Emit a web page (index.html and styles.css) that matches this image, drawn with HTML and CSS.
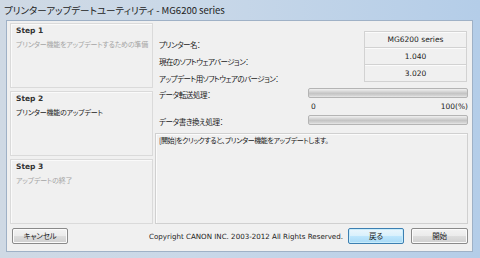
FILE: index.html
```html
<!DOCTYPE html>
<html lang="ja">
<head>
<meta charset="utf-8">
<link rel="stylesheet" href="styles.css">
</head>
<body>
<div class="window">
  <div class="titlebar"><span class="title">プリンターアップデートユーティリティ - MG6200 series</span></div>
  <div class="client">
    <div class="main">
      <div class="steps">
        <div class="step">
          <div class="step-title">Step 1</div>
          <div class="step-desc dim">プリンター機能をアップデートするための準備</div>
        </div>
        <div class="step">
          <div class="step-title">Step 2</div>
          <div class="step-desc">プリンター機能のアップデート</div>
        </div>
        <div class="step">
          <div class="step-title">Step 3</div>
          <div class="step-desc dim">アップデートの終了</div>
        </div>
      </div>
      <div class="panel">
        <div class="info">
          <div class="label">プリンター名：</div>
          <div class="value first">MG6200 series</div>
          <div class="label">現在のソフトウェアバージョン：</div>
          <div class="value">1.040</div>
          <div class="label">アップデート用ソフトウェアのバージョン：</div>
          <div class="value">3.020</div>
        </div>
        <div class="prog-row">
          <div class="prog-label">データ転送処理：</div>
          <div class="bar"></div>
        </div>
        <div class="scale"><span>0</span><span>100(%)</span></div>
        <div class="prog-row second">
          <div class="prog-label">データ書き換え処理：</div>
          <div class="bar"></div>
        </div>
        <div class="message">[開始]をクリックすると、プリンター機能をアップデートします。</div>
      </div>
    </div>
    <div class="footer">
      <button class="btn">キャンセル</button>
      <div class="copyright">Copyright CANON INC. 2003-2012 All Rights Reserved.</div>
      <button class="btn focus">戻る</button>
      <button class="btn">開始</button>
    </div>
  </div>
</div>
</body>
</html>
```

FILE: styles.css
```css
html, body {
  margin: 0;
  padding: 0;
  width: 480px;
  height: 258px;
  overflow: hidden;
  background: #b8cde3;
}
.window {
  width: 480px;
  height: 258px;
  box-sizing: border-box;
  display: flex;
  flex-direction: column;
  padding: 0 7px 6px 6px;
  background: linear-gradient(90deg, #cfd9e4 0%, #c9d8e8 40%, #b4cde8 100%);
  font-family: "Noto Sans CJK JP", "Noto Sans", sans-serif;
  font-feature-settings: "palt";
  color: #1a1a1a;
}
.titlebar {
  height: 20px;
  display: flex;
  align-items: center;
  margin-left: -2px;
}
.title {
  font-size: 9.5px;
  color: #1c1c1c;
}
.client {
  flex: 1;
  display: flex;
  flex-direction: column;
  background: #f0f0f0;
  border: 1px solid #9fb1c6;
  padding: 2px 4px 0 3px;
}
.main {
  height: 201px;
  display: flex;
  gap: 2px;
}
.steps {
  width: 143px;
  display: flex;
  flex-direction: column;
  gap: 3px;
}
.step {
  height: 65px;
  box-sizing: border-box;
  border: 1px solid #dadada;
  box-shadow: inset 1px 1px 0 #fafafa;
  padding: 1px 0 0 5px;
}
.step-title {
  font-family: "DejaVu Sans", sans-serif;
  font-size: 7.5px;
  font-weight: 600;
  line-height: 12px;
  color: #333;
}
.step-desc {
  font-size: 7px;
  line-height: 11px;
  margin-top: 2px;
  white-space: nowrap;
  letter-spacing: -0.2px;
}
.dim {
  color: #a5a5a5;
}
.panel {
  flex: 1;
  display: flex;
  flex-direction: column;
  padding-top: 8px;
}
.info {
  display: grid;
  grid-template-columns: 1fr 103px;
  grid-auto-rows: 17px;
  padding-right: 1px;
}
.label {
  font-size: 7.5px;
  letter-spacing: -0.55px;
  line-height: 11px;
  padding: 8px 0 0 4px;
  white-space: nowrap;
}
.value {
  box-sizing: border-box;
  border: 1px solid #d2d2d2;
  border-top: none;
  box-shadow: inset 0 1px 0 #fbfbfb;
  font-family: "DejaVu Sans", sans-serif;
  font-size: 7.5px;
  display: flex;
  align-items: center;
  justify-content: center;
  color: #222;
}
.value.first {
  border-top: 1px solid #d2d2d2;
}
.prog-row {
  display: flex;
  align-items: flex-start;
  margin-top: 6px;
}
.prog-row.second {
  margin-top: 2px;
}
.prog-label {
  flex: 1;
  font-size: 7.5px;
  letter-spacing: -0.4px;
  line-height: 11px;
  padding: 1px 0 0 4px;
}
.bar {
  width: 160px;
  height: 10px;
  box-sizing: border-box;
  border: 1px solid #b4b4b4;
  border-radius: 2px;
  background: linear-gradient(180deg, #f0f0f0 0%, #d8d8d8 30%, #c4c4c4 55%, #d2d2d2 80%, #e8e8e8 100%);
}
.scale {
  margin-left: auto;
  width: 160px;
  box-sizing: border-box;
  padding-left: 3px;
  display: flex;
  justify-content: space-between;
  font-family: "DejaVu Sans", sans-serif;
  font-size: 7.5px;
  line-height: 13px;
  color: #222;
}
.message {
  margin-top: 6px;
  height: 95px;
  box-sizing: border-box;
  border: 1px solid #d0d0d0;
  box-shadow: inset 1px 1px 0 #fbfbfb;
  padding: 1px 0 0 3px;
  font-size: 7px;
  line-height: 11px;
  letter-spacing: -0.4px;
}
.footer {
  flex: 1;
  display: flex;
  align-items: center;
  padding: 0 0 3px 2px;
}
.btn {
  width: 56px;
  height: 16px;
  box-sizing: border-box;
  border: 1px solid #8a8a8a;
  border-radius: 2px;
  background: linear-gradient(180deg, #f3f3f3 0%, #ebebeb 50%, #dddddd 51%, #cfcfcf 100%);
  box-shadow: inset 0 0 0 1px #fbfbfb;
  font-family: "Noto Sans CJK JP", sans-serif;
  font-feature-settings: "palt";
  font-size: 7.5px;
  letter-spacing: -0.2px;
  color: #1a1a1a;
  padding: 0;
  line-height: 14px;
}
.btn.focus {
  border-color: #3c7fb1;
  background: linear-gradient(180deg, #eaf6fd 0%, #d9f0fc 50%, #bee6fd 51%, #a7d9f5 100%);
  box-shadow: inset 0 0 0 1px #c8ecfb;
  margin-right: 7px;
  width: 56px;
}
.btn:last-child {
  width: 57px;
}
.copyright {
  flex: 1;
  text-align: right;
  padding-right: 5px;
  font-family: "DejaVu Sans", sans-serif;
  font-size: 7.1px;
  color: #222;
  white-space: nowrap;
}
```
